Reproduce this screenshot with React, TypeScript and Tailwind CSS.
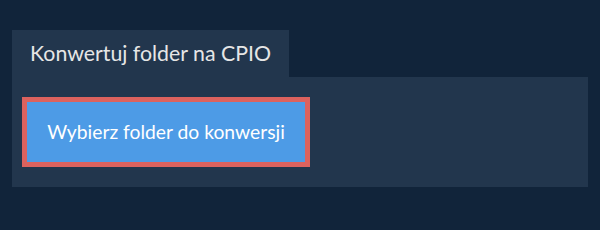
export default function App() {
  return (
    <div className="h-[230px] w-[600px] bg-[#11243a] px-[12px] pt-[30px] font-['Lato',sans-serif]">
      <div className="flex">
        <div className="bg-[#22364d] px-[18px] h-[47px] flex items-center text-[21.3px] text-[#e6e6e6]">
          Konwertuj folder na CPIO
        </div>
      </div>
      <div className="bg-[#22364d] h-[110px] w-[576px] px-[10px] pt-[20px]">
        <button className="h-[70px] w-[288px] border-[5px] border-[#dc625e] bg-[#4d9be6] text-white text-[19.3px] flex items-center justify-center">
          Wybierz folder do konwersji
        </button>
      </div>
    </div>
  );
}
